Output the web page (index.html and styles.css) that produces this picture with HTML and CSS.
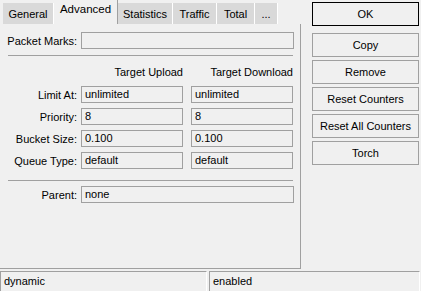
FILE: index.html
```html
<html>
<head>
<meta http-equiv="Content-Type" content="text/html; charset=utf-8" />
<title>Queue</title>
<link rel="stylesheet" href="styles.css">
</head>
<body>
<div class="window">
	<div class="main">
		<div class="tabview">
			<div class="tabs">
				<span class="tab">General</span>
				<span class="tab active">Advanced</span>
				<span class="tab">Statistics</span>
				<span class="tab">Traffic</span>
				<span class="tab">Total</span>
				<span class="tab">...</span>
			</div>
			<div class="panel">
				<div class="row">
					<span class="lbl">Packet Marks:</span>
					<span class="field wide"></span>
				</div>
				<div class="sep"></div>
				<div class="row head">
					<span class="lbl"></span>
					<span class="col">Target Upload</span>
					<span class="col">Target Download</span>
				</div>
				<div class="grid">
					<div class="row">
						<span class="lbl">Limit At:</span>
						<span class="field">unlimited</span>
						<span class="field">unlimited</span>
					</div>
					<div class="row">
						<span class="lbl">Priority:</span>
						<span class="field">8</span>
						<span class="field">8</span>
					</div>
					<div class="row">
						<span class="lbl">Bucket Size:</span>
						<span class="field">0.100</span>
						<span class="field">0.100</span>
					</div>
					<div class="row">
						<span class="lbl">Queue Type:</span>
						<span class="field">default</span>
						<span class="field">default</span>
					</div>
				</div>
				<div class="sep sep2"></div>
				<div class="row parent">
					<span class="lbl">Parent:</span>
					<span class="field wide">none</span>
				</div>
			</div>
		</div>
		<div class="buttons">
			<span class="btn default">OK</span>
			<span class="btn">Copy</span>
			<span class="btn">Remove</span>
			<span class="btn">Reset Counters</span>
			<span class="btn">Reset All Counters</span>
			<span class="btn">Torch</span>
		</div>
	</div>
	<div class="status">
		<div class="cell first">dynamic</div>
		<div class="cell second">enabled</div>
	</div>
</div>
</body>
</html>
```

FILE: styles.css
```css
body{
	margin:0;
	background:#f0f0f0;
	font-family:"Liberation Sans", Arial, sans-serif;
	font-size:11px;
	color:#000;
}
.window{
	width:421px;
	height:291px;
	display:flex;
	flex-direction:column;
	overflow:hidden;
}
.main{
	display:flex;
	height:269px;
}
.tabview{
	width:301px;
	display:flex;
	flex-direction:column;
}
.tabs{
	height:24px;
	display:flex;
	align-items:flex-end;
	padding-left:3px;
}
.tab{
	height:21px;
	line-height:22px;
	background:#d9d9d9;
	border-right:1px solid #fff;
	text-align:center;
	box-sizing:border-box;
}
.tab:nth-child(1){ width:51px; }
.tab:nth-child(2){ width:64px; }
.tab:nth-child(3){ width:55px; }
.tab:nth-child(4){ width:44px; }
.tab:nth-child(5){ width:38px; }
.tab:nth-child(6){ width:23px; }
.tab.active{
	height:24px;
	line-height:19px;
	font-size:11.5px;
	background:#f0f0f0;
	border-right:1px solid #a0a0a0;
}
.panel{
	flex:1;
	border-right:1px solid #a0a0a0;
	border-bottom:1px solid #a0a0a0;
	padding-top:8px;
}
.row{
	display:flex;
	align-items:center;
	height:17px;
}
.lbl{
	width:77px;
	margin-right:4px;
	text-align:right;
	white-space:nowrap;
}
.field{
	box-sizing:border-box;
	width:102px;
	height:17px;
	line-height:15px;
	border:1px solid #a0a0a0;
	padding-left:3px;
}
.field + .field{
	margin-left:8px;
}
.field.wide{
	width:213px;
}
.sep{
	margin:6px 7px 0 8px;
	border-top:1px solid #a0a0a0;
}
.head{
	margin-top:9px;
	height:13px;
}
.head .col{
	width:102px;
	text-align:right;
}
.head .col + .col{
	margin-left:8px;
}
.grid{
	margin-top:8px;
	display:flex;
	flex-direction:column;
	gap:5px;
}
.sep2{
	margin-top:11px;
}
.parent{
	margin-top:5px;
}
.buttons{
	margin-left:11px;
	padding-top:2px;
	width:107px;
	display:flex;
	flex-direction:column;
	gap:3px;
}
.btn{
	box-sizing:border-box;
	height:24px;
	line-height:22px;
	border:1px solid #a0a0a0;
	text-align:center;
}
.btn.default{
	border-color:#000;
	margin-bottom:4px;
}
.status{
	margin-top:2px;
	display:flex;
	height:20px;
}
.cell{
	box-sizing:border-box;
	border-top:1px solid #a0a0a0;
	border-left:1px solid #a0a0a0;
	border-right:1px solid #fff;
	line-height:19px;
	padding-left:3px;
}
.cell.first{
	width:207px;
}
.cell.second{
	margin-left:2px;
	width:211px;
}
```
